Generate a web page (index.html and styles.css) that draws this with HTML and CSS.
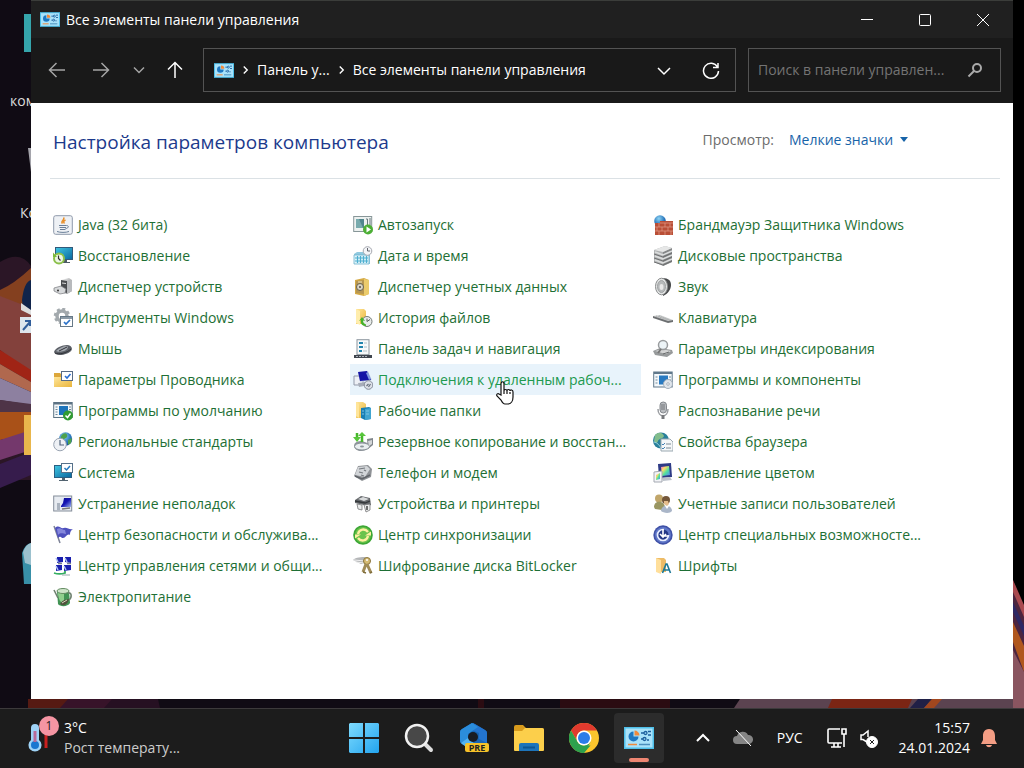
FILE: index.html
```html
<!DOCTYPE html>
<html lang="ru">
<head>
  <meta charset="UTF-8" />
  <title>Все элементы панели управления</title>
  <link rel="stylesheet" href="styles.css">
</head>
<body>
  <svg class="sprite" aria-hidden="true">
    <defs>
      <linearGradient id="g-screen" x1="0" y1="0" x2="1" y2="1"><stop offset="0" stop-color="#3fc4e0"/><stop offset="1" stop-color="#0b6aa2"/></linearGradient>
      <linearGradient id="g-folder" x1="0" y1="0" x2="1" y2="1"><stop offset="0" stop-color="#ffe69a"/><stop offset="1" stop-color="#eab53c"/></linearGradient>
      <linearGradient id="g-metal" x1="0" y1="0" x2="1" y2="1"><stop offset="0" stop-color="#f2f2f2"/><stop offset="1" stop-color="#7d7f82"/></linearGradient>
      <radialGradient id="g-globe" cx=".4" cy=".3" r=".8"><stop offset="0" stop-color="#8fd4f4"/><stop offset=".6" stop-color="#2a78bd"/><stop offset="1" stop-color="#123e80"/></radialGradient>
      <linearGradient id="g-navy" x1="0" y1="0" x2="1" y2="1"><stop offset="0" stop-color="#0a0a8c"/><stop offset=".5" stop-color="#1515b4"/><stop offset="1" stop-color="#9db6ee"/></linearGradient>
      <linearGradient id="g-win" x1="0" y1="0" x2="1" y2="1"><stop offset="0" stop-color="#7fdcff"/><stop offset="1" stop-color="#22a3ee"/></linearGradient>
      <linearGradient id="g-rainbow" x1="0" y1="0" x2="1" y2="1"><stop offset="0" stop-color="#f06ad8"/><stop offset=".3" stop-color="#fd6"/><stop offset=".6" stop-color="#4de0a0"/><stop offset="1" stop-color="#5a7bff"/></linearGradient>
    </defs>

    <symbol id="i-panel" viewBox="0 0 30 22">
      <rect width="30" height="22" fill="#4fc0ea"/><rect x="1.500" y="1.500" width="27" height="19" fill="#a9e2fa"/>
      <path d="M9.500 4.500a5 5 0 1 0 5 5h-5z" fill="#1e78c2"/><path d="M10.500 3.500v5h5a5 5 0 0 0-5-5z" fill="#f08a3c"/>
      <g fill="none" stroke="#1d5f9e" stroke-width="1.300"><path d="M17 6h3M17 12h2"/><circle cx="21.500" cy="6" r="1.500"/><circle cx="20.500" cy="12" r="1.500"/><path d="M24 4.500h3M24 8h3M23 13h2"/></g>
      <path d="M4 17.500h9" stroke="#f08a3c" stroke-width="1.500"/><path d="M15 17.500h11" stroke="#4a8fbd" stroke-width="1.500"/>
    </symbol>

    <symbol id="i-java" viewBox="0 0 20 20">
      <rect x=".7" y=".7" width="18.600" height="18.600" rx="2" fill="#eef1f5" stroke="#8e99aa"/>
      <path d="M10.500 2.500c2 2-3.500 3.500-1 6M12.500 5c-2 1-2.500 2-1 3.500" fill="none" stroke="#e8902c" stroke-width="1.500"/>
      <path d="M6 10.500h7.500M6.500 12.500h6.500M7 14.500h5.500" stroke="#6a7f98" stroke-width="1.200"/><path d="M13.500 10.500c3 0 2 3-1 3M4 16.500c3 1.200 9 1.200 12 0" fill="none" stroke="#6a7f98"/>
    </symbol>
    <symbol id="i-recovery" viewBox="0 0 20 20">
      <path d="M2 1h18v13H2z" fill="#31597a"/><path d="M3 2h16v11H3z" fill="url(#g-screen)"/><path d="M11 14h3v2h3v1h-8z" fill="#4e5c66"/>
      <circle cx="6" cy="12.500" r="5" fill="#eef7e6" stroke="#8cc04c" stroke-width="2"/><path d="M5.500 9.500v3l2 2" fill="none" stroke="#333" stroke-width="1.200"/><path d="M0 6.500v4.500h4z" fill="#7eb93c"/>
    </symbol>
    <symbol id="i-device" viewBox="0 0 20 20">
      <path d="M8 3l8-2 3 2v11l-5 3-6-2z" fill="url(#g-metal)"/><path d="M8 3l6 1v12l-6-2z" fill="#4b4d50"/><path d="M14 4l5-1v11l-5 3z" fill="#b8babd"/><path d="M1 11l7-2 5 3-1 4-5 1-6-3z" fill="#d7d9db" stroke="#77797c" stroke-width=".7"/><circle cx="5" cy="13.500" r="1" fill="#333"/><path d="M9 6l4 .5" stroke="#ddd"/>
    </symbol>
    <symbol id="i-tools" viewBox="0 0 20 20">
      <circle cx="9" cy="8" r="5" fill="none" stroke="#a3a9ad" stroke-width="3.500"/><circle cx="9" cy="8" r="7" fill="none" stroke="#a3a9ad" stroke-width="2.500" stroke-dasharray="3 2.500"/>
      <rect x="7.500" y="8.500" width="12" height="10" fill="#fff" stroke="#667988"/><path d="M7.500 10h12" stroke="#667988" stroke-width="1.500"/><path d="M11 14l2 2 4-4" fill="none" stroke="#2a71c8" stroke-width="1.700"/>
    </symbol>
    <symbol id="i-mouse" viewBox="0 0 20 20">
      <path d="M1 13c1-4 8-7 13-7 5 .5 6 4 4 6-3 4-16 6-17 1z" fill="#5b5f66"/><path d="M3 12c3-3 7-5 11-5 2 1 0 4-3 5-3 1-7 1-8 0z" fill="#a2a7ae"/><path d="M6 12l8-4M2 14c4 2 12 0 16-4" fill="none" stroke="#303238" stroke-width="1"/>
    </symbol>
    <symbol id="i-explorer" viewBox="0 0 20 20">
      <path d="M1 3h6l2 2h10v12H1z" fill="#dda73a"/><path d="M1 7h18v10H1z" fill="url(#g-folder)"/><rect x="8.500" y="1.500" width="11" height="9" fill="#fff" stroke="#586b85"/><path d="M12 6l2 2 3.500-4" fill="none" stroke="#2b6ed2" stroke-width="1.600"/>
    </symbol>
    <symbol id="i-defaults" viewBox="0 0 20 20">
      <rect x=".7" y="1.500" width="18.500" height="15" fill="#f5f8fa" stroke="#5c7384"/><path d="M1 2.500h18" stroke="#5c7384" stroke-width="2"/><rect x="6" y="5" width="9" height="9" fill="#1d74bb"/><path d="M2.500 6h2M2.500 8.500h2M2.500 11h2M2.500 13.500h2M16 6h2M16 8.500h2" stroke="#6c8699"/>
      <circle cx="15" cy="14.500" r="5" fill="#309b32"/><path d="M12.500 14.500l2 2 3-4" fill="none" stroke="#fff" stroke-width="1.500"/>
    </symbol>
    <symbol id="i-region" viewBox="0 0 20 20">
      <circle cx="12.500" cy="7" r="6.700" fill="url(#g-globe)"/><path d="M10 2c3-2 5 1 4 3s-4 1-4 4c-3-1-3-5 0-7zM15 8l4-2-1 5-3 2z" fill="#4da24d"/><circle cx="7" cy="12.500" r="6.300" fill="#eef1f5" stroke="#9aa4b2"/><path d="M7 8v5h4" fill="none" stroke="#53657d" stroke-width="1.200"/>
    </symbol>
    <symbol id="i-system" viewBox="0 0 20 20">
      <path d="M1 2h18v13H1z" fill="#2a5f82"/><path d="M2 3h16v11H2z" fill="url(#g-screen)"/><path d="M9 15h3v2h3v1H6v-1h3z" fill="#526370"/><rect x="8.500" y=".5" width="11" height="9" fill="#fff" stroke="#56718a"/><path d="M11.500 5l2 2 3.500-4" fill="none" stroke="#2679bf" stroke-width="1.500"/>
    </symbol>
    <symbol id="i-trouble" viewBox="0 0 20 20">
      <rect x=".7" y="2" width="18" height="15" fill="#e7ebf1" stroke="#848d99"/><path d="M8 4h10v9H8z" fill="url(#g-navy)"/><path d="M8 4h3l-1 5-2 3z" fill="#dfe7f7"/><path d="M4 9h3v7H4z" fill="#aab3bf"/><path d="M9 15l8-1" stroke="#777" stroke-width="1.500"/>
    </symbol>
    <symbol id="i-flag" viewBox="0 0 20 20">
      <path d="M1 1l6 17" stroke="#7d8296" stroke-width="1.500"/><path d="M2 3c4-4 5 1 9 0 3-1 5 2 9 1-3 2-3 4-3 6-3-2-4 3-7 3-2 0-2-3-5 0z" fill="#4e50bd"/><path d="M4 4c4-2 4 1 8 1l1 4c-3 0-5-2-8 1z" fill="#8587dc"/>
    </symbol>
    <symbol id="i-network" viewBox="0 0 20 20">
      <g fill="#1a1fae"><path d="M4 1h6v5l-6 1zM12 1h6v6l-6-1zM3 9h6v5l-6 1zM11 9h7v5l-7 1z"/></g><path d="M3 2l2 4M12 2l2 4M3 10l2 4M11 10l2 4" stroke="#afc0f1" stroke-width="1.500"/><path d="M5 7.500h4M14 7.500h4" stroke="#77818e" stroke-width="1.500"/><path d="M1 17c3 1 8 1 11 0v-2" stroke="#35ae62" stroke-width="1.800" fill="none"/><path d="M9 19h8" stroke="#9aa" stroke-width="1"/>
    </symbol>
    <symbol id="i-power" viewBox="0 0 20 20">
      <path d="M4 4h12l1 12c-2 4-10 4-12 1z" fill="#419354"/><path d="M5 5h6v12c-3-1-6-4-6-12z" fill="#8fcf8d"/><ellipse cx="10" cy="4" rx="6" ry="2.500" fill="#cde4c9" stroke="#648c62"/><path d="M1 3l4 8M15 6c4-1 4 5 1 7" fill="none" stroke="#708271" stroke-width="1.600"/><path d="M7 17c3-5 6-4 9-5-1 5-5 8-9 5z" fill="#51523d"/><path d="M9 16l5-3" stroke="#d9d6bd"/>
    </symbol>

    <symbol id="i-autoplay" viewBox="0 0 20 20">
      <rect x=".7" y="1.500" width="18" height="15" fill="#edf1f0" stroke="#879698"/><rect x="3" y="4" width="8" height="9" fill="#4f868d"/><path d="M3 4h3l4 9H3z" fill="#78aaad"/><path d="M13 4h1.500v6M17 3v7" fill="none" stroke="#67797c"/><circle cx="15" cy="14.500" r="5" fill="#4caf35"/><path d="M13.500 11.500v6l4.500-3z" fill="#fff"/>
    </symbol>
    <symbol id="i-date" viewBox="0 0 20 20">
      <path d="M1 8l3-2h13v12H1z" fill="#91c9df"/><path d="M1 9h15v9H1z" fill="#dff4fb" stroke="#6cb2cd" stroke-width=".8"/><path d="M2 12h13M2 15h13M4.500 10v7M7.500 10v7M10.500 10v7M13.500 10v7" stroke="#4eafd0" stroke-width="1.200"/><circle cx="14.500" cy="5" r="4.300" fill="#f4f5f8" stroke="#a6a9b0"/><path d="M14.500 2v3h2.500" fill="none" stroke="#63666e"/>
    </symbol>
    <symbol id="i-safe" viewBox="0 0 20 20">
      <path d="M2 3l9-2 5 2v14l-5 2-9-2z" fill="#d5aa45"/><path d="M11 2l5 1v14l-5 2z" fill="#ebcb6c"/><path d="M3 4l8-1v14l-8-1z" fill="#b69651"/><circle cx="7" cy="10" r="3.500" fill="#d9d4c5" stroke="#68614c"/><circle cx="7" cy="10" r="1" fill="#544d3d"/><path d="M5 5h4" stroke="#f2e6bb"/>
    </symbol>
    <symbol id="i-history" viewBox="0 0 20 20">
      <path d="M3 1h8l2 2v13H3z" fill="url(#g-folder)"/><path d="M3 1l4 2v14l-4-2z" fill="#ffedac"/><circle cx="14" cy="13.500" r="5" fill="#e9eceb" stroke="#737b77"/><path d="M14 10.500v3l3-2" fill="none" stroke="#59615d"/><path d="M13 18c-4 0-6-3-5-6l-2 1 3-4 3 4-2-.5c0 2 1 3 3 4z" fill="#45b12a"/>
    </symbol>
    <symbol id="i-taskbar" viewBox="0 0 20 20">
      <rect x="4" y=".7" width="12" height="15" fill="#f7f9fa" stroke="#8c969e"/><path d="M6 4h4M6 8h4M6 12h3" stroke="#2184ad" stroke-width="1.800"/><path d="M11 4h3M11 8h3M10 12h4" stroke="#b4c1c9"/><path d="M1 16h18v3H1z" fill="#3f454e"/><path d="M3 17.500h12" stroke="#aab1ba" stroke-dasharray="2 1"/>
    </symbol>
    <symbol id="i-remote" viewBox="0 0 20 20">
      <path d="M1 6h9v9H1z" fill="#edf0f6" stroke="#9299a9"/><path d="M5 2l10-1 4 9-12 2z" fill="#d0d8e8"/><path d="M5 2l9-1 4 9-11 1z" fill="#1515a5"/><path d="M13 3l2-1 3 7-2 1z" fill="#829dde"/><path d="M5 13l9-1 2 3-10 2z" fill="#a7adb9"/><circle cx="15.500" cy="15" r="4.300" fill="#dce0e7" stroke="#858c9a"/><path d="M13.500 16l2-2M15.500 17l2-3" stroke="#68717e" stroke-width="1.200"/>
    </symbol>
    <symbol id="i-work" viewBox="0 0 20 20">
      <path d="M3 1h7l3 2v14H3z" fill="url(#g-folder)"/><path d="M3 1l3 2v14l-3-2z" fill="#ffe59a"/><path d="M8 7l8-1 2 1v11l-6 1-4-2z" fill="#187fb4"/><path d="M12 8l6-1v11l-6 1z" fill="#40a5d0"/><path d="M9 10h2M9 13h2M13 10h3M13 13h3" stroke="#7fc4e2"/>
    </symbol>
    <symbol id="i-backup" viewBox="0 0 20 20">
      <path d="M14 7l6-1v7l-5 4z" fill="#80868b"/><path d="M1 14c0-4 4-5 8-5l8 3v3c-4 5-15 6-16-1z" fill="#8f969c"/><ellipse cx="9" cy="14.500" rx="7.500" ry="3.500" fill="#e9eef0" stroke="#8a9298"/><ellipse cx="9" cy="14.500" rx="2" ry="1" fill="#8b949b"/><path d="M15 9l4-1v4l-3 2z" fill="#d3d6d8"/><path d="M4 1v6M9 10V3" stroke="#47b72c" stroke-width="2.500"/><path d="M0 5h8l-4 5zM5 4h8L9 0z" fill="#58c63b"/>
    </symbol>
    <symbol id="i-phone" viewBox="0 0 20 20">
      <path d="M5 3l10-1 4 4-1 8-9 4-8-5z" fill="#8f9296"/><path d="M5 4l9-1 3 3-5 8-10-2z" fill="#d2d5d8"/><path d="M6 6l6-1M6 9l4 1M11 7l2 1M8 12l3 1" stroke="#75797e" stroke-width="1.200"/><path d="M2 13l7 3 8-4" fill="none" stroke="#606469" stroke-width="1.500"/>
    </symbol>
    <symbol id="i-printer" viewBox="0 0 20 20">
      <path d="M2 6l6-4 9 2 1 7-3 1-13-3z" fill="#66696c"/><path d="M5 5l5-2 6 2-5 2z" fill="#d8dadb"/><path d="M2 7l10 2 5-2" fill="none" stroke="#34373a" stroke-width="1.300"/><path d="M4 10l5 1v5l-4-1zM11 11l6-1v6l-4 2z" fill="#eceded" stroke="#77797a" stroke-width=".8"/><path d="M14 12v4" stroke="#444" stroke-width="1.500"/>
    </symbol>
    <symbol id="i-sync" viewBox="0 0 20 20">
      <circle cx="10" cy="10" r="9.800" fill="#3da735"/><circle cx="10" cy="10" r="8" fill="#6ac34c"/><path d="M5 9c1-5 7-6 10-2M15 11c-1 5-7 6-10 2" fill="none" stroke="#fff0a0" stroke-width="2.300"/><path d="M18 6.500v4h-6zM2 13.500v-4h6z" fill="#fff0a0"/>
    </symbol>
    <symbol id="i-keys" viewBox="0 0 20 20">
      <path d="M0 4c3-3 8-3 13-3l-1 6-4 1z" fill="#b4b6b8"/><path d="M1 4l11 1M3 6l8 1" stroke="#eee"/><circle cx="14" cy="5" r="3.500" fill="#d5bb74" stroke="#89743d"/><path d="M13 8l-3 8M14 8l4 9" stroke="#a08c58" stroke-width="3"/><path d="M10 16l3 1M17 17l2-1" stroke="#7f6c3b" stroke-width="1.500"/><circle cx="14" cy="4" r="1" fill="#fff"/>
    </symbol>

    <symbol id="i-firewall" viewBox="0 0 20 20">
      <circle cx="7" cy="6" r="5.800" fill="url(#g-globe)"/><path d="M2 8h5V6h6v0h7v14H2z" fill="#b94e36"/><path d="M2 12h18M2 16h18M7 8h13M6 8v4M12 8v4M17 8v4M9 12v4M15 12v4M4 12v4M6 16v4M12 16v4M18 16v4" stroke="#dd9682" stroke-width=".8"/>
    </symbol>
    <symbol id="i-storage" viewBox="0 0 20 20">
      <path d="M1 4l11-4 7 2v14l-9 4-9-4z" fill="#b0b2b3"/><path d="M10 6l9-4v14l-9 4z" fill="#858788"/><path d="M1 4l9 2 9-4-7-2z" fill="#e6e7e7"/><path d="M2 6l8 3 9-4M2 10l8 3 9-4M2 14l8 3 9-4" fill="none" stroke="#dcdede" stroke-width="1.500"/><path d="M1 8l9 3 9-4M1 12l9 3 9-4M1 16l9 3 9-4" fill="none" stroke="#6f7172"/>
    </symbol>
    <symbol id="i-sound" viewBox="0 0 20 20">
      <path d="M9 1c7 0 9 3 9 7s-3 9-8 11z" fill="#47494b"/><ellipse cx="8.500" cy="9.500" rx="6" ry="8.300" fill="#e1e3e3" stroke="#8b8d8e"/><ellipse cx="8.500" cy="9.500" rx="4" ry="6" fill="#b7babb" stroke="#a0a3a4"/><ellipse cx="8.500" cy="10" rx="2" ry="3" fill="#e9e9e9"/>
    </symbol>
    <symbol id="i-keyboard" viewBox="0 0 20 20">
      <path d="M0 8l7-1 13 5-5 2z" fill="#c8caca"/><path d="M0 8l15 5 5-1v2l-5 1L0 10z" fill="#6c6f71"/><path d="M3 8l12 4M6 8l11 4" stroke="#a5a8a9" stroke-dasharray="1 1"/>
    </symbol>
    <symbol id="i-index" viewBox="0 0 20 20">
      <path d="M0 12l7-3 12 2 1 3-6 4-12-2z" fill="#979a9b"/><path d="M2 12l7-2 9 2-5 3z" fill="#d3d4d4"/><circle cx="10" cy="6" r="4.500" fill="#edf4f7" stroke="#999c9e" stroke-width="1.500"/><path d="M8 10l-3 4" stroke="#777" stroke-width="2"/><path d="M10 15l6-2" stroke="#696c6d"/>
    </symbol>
    <symbol id="i-programs" viewBox="0 0 20 20">
      <rect x=".7" y="2" width="18.500" height="15" fill="#f4f8fb" stroke="#60788b"/><path d="M1 3h18" stroke="#60788b" stroke-width="2"/><rect x="6" y="5.500" width="9" height="9" fill="#297ac1"/><path d="M2.500 7h2M2.500 10h2M2.500 13h2M16 7h2M16 10h2" stroke="#718b9d"/><circle cx="15" cy="14" r="4.500" fill="#dfe5eb" stroke="#a5b0bc"/><circle cx="15" cy="14" r="1.300" fill="#fff" stroke="#a5b0bc"/>
    </symbol>
    <symbol id="i-mic" viewBox="0 0 20 20">
      <rect x="7" y="1" width="6.500" height="11" rx="3.200" fill="#b9bcc0" stroke="#84888d"/><path d="M8 4h4M8 6h4M8 8h4" stroke="#73777b"/><path d="M5 8c0 9 10 9 10 0" fill="none" stroke="#9b9ea2" stroke-width="1.500"/><path d="M10 14v4" stroke="#77797c" stroke-width="3"/>
    </symbol>
    <symbol id="i-browser" viewBox="0 0 20 20">
      <circle cx="8" cy="8.500" r="8" fill="#297f9b"/><path d="M2 3c4-4 8-2 9 1-1 3-5 2-6 5s-3 2-4 0z" fill="#82bd8c"/><path d="M1 10c4 1 5 3 7 6" stroke="#93d0df" fill="none"/><path d="M8 7h9l3 3v9H8z" fill="#f5f7f8" stroke="#9aa8b1"/><path d="M9 12l1 1 2-2M9 16l1 1 2-2" fill="none" stroke="#4682b3"/><path d="M13 12h5M13 16h5" stroke="#7c8a94"/>
    </symbol>
    <symbol id="i-color" viewBox="0 0 20 20">
      <path d="M5 1l13-1 1 14-13 1z" fill="#2e3b86"/><path d="M8 4l8-1 1 9-8 1z" fill="url(#g-rainbow)"/><path d="M9 15l8-1 2 3-9 1z" fill="#bcc2cb"/><path d="M1 9l8-1v11H1z" fill="#f3f4f7" stroke="#a4a9b2"/><path d="M3 12l4-2v6l-4 1z" fill="url(#g-rainbow)"/>
    </symbol>
    <symbol id="i-users" viewBox="0 0 20 20">
      <circle cx="6" cy="4.500" r="4" fill="#c1a66a"/><path d="M1 13c0-7 10-7 11 0l-3 3-7-1z" fill="#9a9662"/><circle cx="13" cy="6" r="4" fill="#74573a"/><path d="M11 7h4l1 3-2 2-3-2z" fill="#e5bc8b"/><path d="M8 17c0-7 11-7 11 0-2 3-9 2-11 0z" fill="#aab6c8"/><path d="M12 12l2 3 2-3" fill="#fff"/>
    </symbol>
    <symbol id="i-access" viewBox="0 0 20 20">
      <circle cx="10" cy="10" r="9.700" fill="#3f51a7"/><circle cx="10" cy="10" r="8" fill="#6077c8"/><circle cx="10" cy="10" r="5.500" fill="#243786" stroke="#e7edff" stroke-width="1.700" stroke-dasharray="26 8"/><path d="M10 4v7h5M7 9l3 3 3-3" fill="none" stroke="#fff" stroke-width="1.600"/>
    </symbol>
    <symbol id="i-fonts" viewBox="0 0 20 20">
      <path d="M3 2h8l2 2v12H3z" fill="#edbb66"/><path d="M3 2l5 2v14l-5-2z" fill="#ffdf9b"/><path d="M9.500 17l3.500-9h1l3.500 9M11 14h5" fill="none" stroke="#1c7998" stroke-width="1.600"/>
    </symbol>
  </svg>

  <main class="desktop">
    <svg class="wallpaper" viewBox="0 0 1024 708" preserveAspectRatio="none" aria-hidden="true">
      <rect width="1024" height="708" fill="#100b14"/>
      <path d="M0 262Q20 250 31 266V480H0z" fill="#2b1626"/>
      <path d="M0 290Q14 284 31 268V306L0 304z" fill="#84401f"/>
      <path d="M0 296L31 308V375L0 350z" fill="#83413c"/>
      <path d="M0 350L31 370V382L0 364z" fill="#a02415"/>
      <path d="M0 364L31 382V392L0 378z" fill="#b0684e"/>
      <path d="M0 378L31 392V405L0 400z" fill="#8d80a0"/>
      <path d="M0 400L31 404V414L0 416z" fill="#4e3447"/>
      <path d="M0 412H31V434L0 440z" fill="#a95118"/>
      <path d="M0 440L31 430V450L0 460z" fill="#74386c"/>
      <path d="M0 464L31 452V475L0 488z" fill="#361c4c"/>
      <path d="M28 699h84v9H28z" fill="#371329"/><path d="M28 699h40l-8 9H28z" fill="#561a13"/><path d="M112 699h46l2 9h-56z" fill="#261022"/>
      <path d="M478 699h6v9h-6zM560 699h110v9H560z" fill="#2b0c12"/>
      <path d="M740 699h284v9H734z" fill="#5b4350"/><path d="M832 699h80l-4 9h-80z" fill="#7b2514"/><path d="M918 699h14l-8 9h-14z" fill="#202046"/><path d="M932 699h10l-8 9h-10z" fill="#a1471e"/>
      <path d="M1013 0h11v610l-11-28z" fill="#000"/>
      <path d="M1013 580l11 28v100h-11z" fill="#4c253f"/><path d="M1013 580l11 25v12l-11-25z" fill="#a94a50"/><path d="M1013 602l11 24v10l-11-24z" fill="#2d2764"/><path d="M1013 622l11 24v26l-11-30z" fill="#b0571e"/><path d="M1013 650l11 22v36h-11z" fill="#8a5560"/>
      <path d="M24 14h7v38h-7z" fill="#35a5ac"/>
      <path d="M28 148h3v24z" fill="#a5a5ac"/>
      <path d="M22 300q2-18 9-20v34q-9-2-9-14z" fill="#10244b"/><path d="M21 303l10 7v5l-10-5z" fill="#ddd"/>
      <path d="M20 317h11v16H20z" fill="#dde5ec"/><path d="M23 330l7-8M25 321h5v5" fill="none" stroke="#315d9a" stroke-width="2"/>
      <path d="M24 415h7v40h-7z" fill="#e9b64c"/>
      <path d="M22 553q3-9 9-10v41h-7z" fill="#388fa7"/><path d="M23 552q3-8 8-9v22l-6-2z" fill="#9cc1ce"/>
    </svg>
    <div class="shortcut-labels">
      <span class="label-computer">компь</span>
      <span class="label-trash">Корз</span>
    </div>

    <section class="window">
      <header class="titlebar">
        <svg class="panel-icon"><use href="#i-panel"/></svg>
        <span class="title">Все элементы панели управления</span>
        <div class="window-buttons">
          <button type="button" aria-label="Свернуть"><svg viewBox="0 0 14 14"><path d="M1 6.500h12"/></svg></button>
          <button type="button" aria-label="Развернуть"><svg viewBox="0 0 14 14"><rect x="1.500" y="1.500" width="11" height="11" rx="1"/></svg></button>
          <button type="button" aria-label="Закрыть"><svg viewBox="0 0 14 14"><path d="M1 1l12 12M13 1L1 13"/></svg></button>
        </div>
      </header>

      <nav class="navbar">
        <div class="history">
          <button type="button" class="dim" aria-label="Назад"><svg viewBox="0 0 18 18"><path d="M17 9H2M8.500 2L1.500 9l7 7"/></svg></button>
          <button type="button" class="dim" aria-label="Вперед"><svg viewBox="0 0 18 18"><path d="M1 9h15M9.500 2l7 7-7 7"/></svg></button>
          <button type="button" class="dim small" aria-label="Последние расположения"><svg viewBox="0 0 18 18"><path d="M4 6.500l5 5 5-5"/></svg></button>
          <button type="button" class="up" aria-label="Вверх"><svg viewBox="0 0 18 18"><path d="M9 17V2M2 8.500l7-7 7 7"/></svg></button>
        </div>
        <div class="address">
          <svg class="panel-icon"><use href="#i-panel"/></svg>
          <svg class="sep" viewBox="0 0 8 10"><path d="M2 1l4 4-4 4"/></svg>
          <a href="#" class="crumb">Панель у...</a>
          <svg class="sep" viewBox="0 0 8 10"><path d="M2 1l4 4-4 4"/></svg>
          <a href="#" class="crumb">Все элементы панели управления</a>
          <button type="button" class="address-open" aria-label="Предыдущие расположения"><svg viewBox="0 0 18 18"><path d="M3 7l6 6 6-6"/></svg></button>
          <button type="button" aria-label="Обновить"><svg viewBox="0 0 18 18"><path d="M15.500 6A7.500 7.500 0 1 0 16.500 10M16 2v4.500h-5"/></svg></button>
        </div>
        <form class="search">
          <input type="text" aria-label="Поиск" placeholder="Поиск в панели управлен..." />
          <button type="button" aria-label="Найти"><svg viewBox="0 0 16 16"><circle cx="10" cy="6" r="4"/><path d="M7 9l-5.500 5.500"/></svg></button>
        </form>
      </nav>

      <div class="content">
        <div class="heading">
          <h1>Настройка параметров компьютера</h1>
          <label for="view">Просмотр:</label>
          <div class="view-select">
            <select id="view">
              <option>Мелкие значки</option>
            </select>
            <svg viewBox="0 0 8 5" aria-hidden="true"><path d="M0 0h8L4 5z"/></svg>
          </div>
        </div>

        <ul class="items">
          <li><a href="#"><svg><use href="#i-java"/></svg>Java (32 бита)</a></li>
          <li><a href="#"><svg><use href="#i-autoplay"/></svg>Автозапуск</a></li>
          <li><a href="#"><svg><use href="#i-firewall"/></svg>Брандмауэр Защитника Windows</a></li>
          <li><a href="#"><svg><use href="#i-recovery"/></svg>Восстановление</a></li>
          <li><a href="#"><svg><use href="#i-date"/></svg>Дата и время</a></li>
          <li><a href="#"><svg><use href="#i-storage"/></svg>Дисковые пространства</a></li>
          <li><a href="#"><svg><use href="#i-device"/></svg>Диспетчер устройств</a></li>
          <li><a href="#"><svg><use href="#i-safe"/></svg>Диспетчер учетных данных</a></li>
          <li><a href="#"><svg><use href="#i-sound"/></svg>Звук</a></li>
          <li><a href="#"><svg><use href="#i-tools"/></svg>Инструменты Windows</a></li>
          <li><a href="#"><svg><use href="#i-history"/></svg>История файлов</a></li>
          <li><a href="#"><svg><use href="#i-keyboard"/></svg>Клавиатура</a></li>
          <li><a href="#"><svg><use href="#i-mouse"/></svg>Мышь</a></li>
          <li><a href="#"><svg><use href="#i-taskbar"/></svg>Панель задач и навигация</a></li>
          <li><a href="#"><svg><use href="#i-index"/></svg>Параметры индексирования</a></li>
          <li><a href="#"><svg><use href="#i-explorer"/></svg>Параметры Проводника</a></li>
          <li class="active">
            <a href="#"><svg><use href="#i-remote"/></svg>Подключения к удаленным рабоч...</a>
            <svg class="cursor" viewBox="0 0 18 24" aria-hidden="true"><path d="M5 14V3c0-3 3-3 3 0v7c0-2 3-2 3 0 0-2 3-2 3 0 0-1.500 3-1.500 3 1v5c0 4-2 7-5 7H9c-2 0-3-2-4-4l-4-4c-1-2 1-3 2-2z"/><path d="M8 10v3M11 10v3M14 11v2"/></svg>
          </li>
          <li><a href="#"><svg><use href="#i-programs"/></svg>Программы и компоненты</a></li>
          <li><a href="#"><svg><use href="#i-defaults"/></svg>Программы по умолчанию</a></li>
          <li><a href="#"><svg><use href="#i-work"/></svg>Рабочие папки</a></li>
          <li><a href="#"><svg><use href="#i-mic"/></svg>Распознавание речи</a></li>
          <li><a href="#"><svg><use href="#i-region"/></svg>Региональные стандарты</a></li>
          <li><a href="#"><svg><use href="#i-backup"/></svg>Резервное копирование и восстан...</a></li>
          <li><a href="#"><svg><use href="#i-browser"/></svg>Свойства браузера</a></li>
          <li><a href="#"><svg><use href="#i-system"/></svg>Система</a></li>
          <li><a href="#"><svg><use href="#i-phone"/></svg>Телефон и модем</a></li>
          <li><a href="#"><svg><use href="#i-color"/></svg>Управление цветом</a></li>
          <li><a href="#"><svg><use href="#i-trouble"/></svg>Устранение неполадок</a></li>
          <li><a href="#"><svg><use href="#i-printer"/></svg>Устройства и принтеры</a></li>
          <li><a href="#"><svg><use href="#i-users"/></svg>Учетные записи пользователей</a></li>
          <li><a href="#"><svg><use href="#i-flag"/></svg>Центр безопасности и обслужива...</a></li>
          <li><a href="#"><svg><use href="#i-sync"/></svg>Центр синхронизации</a></li>
          <li><a href="#"><svg><use href="#i-access"/></svg>Центр специальных возможносте...</a></li>
          <li><a href="#"><svg><use href="#i-network"/></svg>Центр управления сетями и общи...</a></li>
          <li><a href="#"><svg><use href="#i-keys"/></svg>Шифрование диска BitLocker</a></li>
          <li><a href="#"><svg><use href="#i-fonts"/></svg>Шрифты</a></li>
          <li><a href="#"><svg><use href="#i-power"/></svg>Электропитание</a></li>
        </ul>
      </div>
    </section>
  </main>

  <footer class="taskbar">
    <button type="button" class="weather">
      <span class="weather-icon">
        <svg viewBox="0 0 22 30" aria-hidden="true"><path d="M18 12v13" stroke="#c8201f" stroke-width="3"/><path d="M3 5a4 4 0 0 1 8 0v12a6.500 6.500 0 1 1-8 0z" fill="#9fd3f7"/><circle cx="7" cy="22" r="4" fill="#1b77d0"/><path d="M7 8v11" stroke="#b86a9a" stroke-width="3"/></svg>
        <span class="badge">1</span>
      </span>
      <span class="weather-text"><span>3°C</span><span class="forecast">Рост температу...</span></span>
    </button>

    <div class="apps">
      <button type="button" aria-label="Пуск"><svg viewBox="0 0 30 30"><path d="M1 0h13v14H0V1zM16 0h13l1 1v13H16zM0 16h14v14H1l-1-1zM16 16h14v13l-1 1H16z" fill="url(#g-win)"/></svg></button>
      <button type="button" aria-label="Поиск"><svg viewBox="0 0 30 30"><path d="M20 20l7 7" stroke="#dedede" stroke-width="4" stroke-linecap="round"/><circle cx="13" cy="13" r="11" fill="#484848" stroke="#f1f1f1" stroke-width="2.500"/></svg></button>
      <button type="button" aria-label="Dev Home"><svg viewBox="0 0 30 30"><path d="M1 9q0-2 2-3L13 0q1 0 3 1l10 6q2 1 2 3v11l-12 8L3 21q-2-1-2-3z" fill="#1765b5"/><path d="M14 0l12 7q2 1 2 3v10l-8-4v-6l-7-3z" fill="#2374cf"/><path d="M1 9q0-2 2-3L13 0l6 4-10 7v6l-7 3q-1-1-1-3z" fill="#2b8ddc"/><path d="M2 20l7-5 9 8-3 6-12-8z" fill="#52b4f4"/><circle cx="14" cy="14" r="5" fill="#191d24"/><rect x="6" y="20" width="24" height="9" rx="2" fill="#f6c229"/><text x="18" y="28" class="pre">PRE</text></svg></button>
      <button type="button" aria-label="Проводник"><svg viewBox="0 0 30 30"><path d="M0 4q0-2 2-2h7l3 3h16q2 0 2 2v8H0z" fill="#d89b1c"/><path d="M0 8h8l3-3h17q2 0 2 2v20q0 1-1 1H1q-1 0-1-1z" fill="#fccf4b"/><path d="M5 28v-6q0-2 2-2h16q2 0 2 2v6z" fill="#1d74ba"/><path d="M9 24.500h12" stroke="#0c5693" stroke-width="2"/></svg></button>
      <button type="button" aria-label="Chrome"><svg viewBox="0 0 30 30"><circle cx="15" cy="15" r="15" fill="#fbc52d"/><path d="M2 7.500a15 15 0 0 1 26 0H15a7.500 7.500 0 0 0-6.500 11.200z" fill="#e03a2e"/><path d="M2 7.500l6.500 11.200A7.500 7.500 0 0 0 15 22.500h6.500L15 30A15 15 0 0 1 2 7.500z" fill="#2da14d"/><path d="M21.500 18.700L15 30a10 10 0 0 1-3-.5l3.500-7z" fill="#2da14d"/><circle cx="15" cy="15" r="7.500" fill="#fff"/><circle cx="15" cy="15" r="6" fill="#2b7de9"/></svg></button>
      <button type="button" class="running" aria-label="Панель управления"><svg class="wide" viewBox="0 0 30 22"><use href="#i-panel"/></svg></button>
    </div>

    <div class="tray">
      <button type="button" aria-label="Скрытые значки"><svg viewBox="0 0 20 20"><path d="M4 13l6-6 6 6" stroke-width="2"/></svg></button>
      <button type="button" aria-label="OneDrive"><svg viewBox="0 0 20 20"><path d="M4 16a4 4 0 0 1 0-8 6 6 0 0 1 11-1 4.500 4.500 0 0 1 1 9z" class="cloud"/><path d="M3 2l15 16"/></svg></button>
      <button type="button" class="lang">РУС</button>
      <button type="button" class="network" aria-label="Сеть"><svg viewBox="0 0 20 20"><path d="M13 1H2q-1 0-1 1v12q0 1 1 1h13M7 15v4M11 15v4M4 19h10M15 1h4v5h-4zM17 6v13" stroke-width="1.600"/></svg></button>
      <button type="button" class="volume" aria-label="Звук"><svg viewBox="0 0 20 20"><path d="M8 14l-4-2.500H2V7h2l5-4v6" stroke-width="1.500"/><circle cx="13" cy="14" r="5.500" class="mute"/><path d="M11 12l4 4M15 12l-4 4" class="cross"/></svg></button>
      <button type="button" class="clock"><span>15:57</span><span>24.01.2024</span></button>
      <button type="button" aria-label="Уведомления"><svg viewBox="0 0 20 20"><path d="M10 1c-5 0-6 4-6 7v4l-2 4h16l-2-4V8c0-3-1-7-6-7zM7 17c1 3 5 3 6 0z" class="bell"/></svg></button>
    </div>
  </footer>
</body>
</html>
```

FILE: styles.css
```css
* {
  box-sizing: border-box;
}

body {
  margin: 0;
  min-height: 100vh;
  display: flex;
  flex-direction: column;
  overflow: hidden;
  font-family: "Open Sans", "Noto Sans", sans-serif;
  font-size: 14px;
  line-height: 20px;
  background-color: #100b14;
}

button,
input,
select {
  font: inherit;
  color: inherit;
  background: none;
  border: none;
  padding: 0;
}

button {
  display: flex;
  align-items: center;
  justify-content: center;
}

a {
  text-decoration: none;
}

.sprite {
  position: absolute;
  width: 0;
  height: 0;
}

/* Desktop */
.desktop {
  position: relative;
  flex: 1;
  display: flex;
  padding: 0 11px 9px 31px;
}

.wallpaper {
  position: absolute;
  inset: 0;
  width: 100%;
  height: 100%;
}

.shortcut-labels span {
  position: absolute;
  color: #ddd;
}

.label-computer {
  top: 91px;
  left: 10px;
}

.label-trash {
  top: 203px;
  left: 20px;
}

/* Window */
.window {
  position: relative;
  flex: 1;
  display: flex;
  flex-direction: column;
  background-color: #fff;
}

.titlebar {
  display: flex;
  align-items: center;
  height: 38px;
  padding: 0 1px 0 9px;
  border-top: 1px solid #3b3d3a;
  background-color: #202020;
  color: #fff;
}

.panel-icon {
  width: 20px;
  height: 15px;
  flex: none;
}

.title {
  margin-left: 6px;
}

.window-buttons {
  display: flex;
  margin-left: auto;
}

.window-buttons button {
  width: 58px;
  height: 37px;
}

.window-buttons svg {
  width: 14px;
  height: 14px;
}

.window-buttons svg,
.navbar button svg,
.sep {
  fill: none;
  stroke: #fff;
}

.navbar {
  display: flex;
  gap: 12px;
  height: 65px;
  padding: 10px 12px 11px 8px;
  background-color: #191919;
  color: #fff;
}

.history {
  display: flex;
  align-items: center;
  gap: 8px;
  width: 152px;
}

.history button {
  width: 36px;
  height: 40px;
}

.history button svg {
  width: 18px;
  height: 18px;
  stroke-width: 1.5;
}

.history .small {
  width: 24px;
}

.history .up {
  width: 32px;
}

.history .dim svg {
  stroke: #a5a5a5;
}

.address {
  display: flex;
  flex: 1;
  align-items: center;
  gap: 8px;
  padding: 0 15px 0 10px;
  border: 1px solid #535353;
}

.crumb {
  color: #fff;
}

.sep {
  width: 7px;
  height: 10px;
  stroke-width: 1.6;
}

.address button svg {
  width: 18px;
  height: 18px;
  stroke-width: 1.5;
}

.address .address-open {
  margin-left: auto;
  margin-right: 21px;
}

.search {
  display: flex;
  align-items: center;
  width: 253px;
  padding: 0 17px 0 9px;
  border: 1px solid #535353;
}

.search input {
  flex: 1;
  min-width: 0;
  outline: none;
}

.search input::placeholder {
  color: #747474;
  opacity: 1;
}

.search button svg {
  width: 16px;
  height: 16px;
  stroke: #aaa;
  stroke-width: 2;
}

/* Content */
.content {
  flex: 1;
  padding: 0 13px 0 19px;
}

.heading {
  display: flex;
  align-items: center;
  height: 76px;
  padding: 0 92px 2px 3px;
  border-bottom: 1px solid #dbe1e5;
}

h1 {
  margin: 4px auto 0 0;
  font-size: 19px;
  line-height: 26px;
  font-weight: normal;
  color: #1c3a8c;
}

.heading label {
  color: #6c6c6c;
}

.view-select {
  display: flex;
  align-items: center;
  gap: 6px;
  margin-left: 15px;
  color: #1763a8;
}

.view-select select {
  appearance: none;
}

.view-select svg {
  width: 8px;
  height: 5px;
  fill: #1763a8;
}

.items {
  display: grid;
  grid-template-columns: repeat(auto-fill, 291px);
  column-gap: 9px;
  margin: 0;
  padding: 30px 0 0;
  list-style: none;
}

.items li {
  position: relative;
}

.items a {
  display: flex;
  align-items: center;
  gap: 5px;
  height: 31px;
  padding-left: 3px;
  white-space: nowrap;
  color: #1e6f35;
}

.items a svg {
  width: 20px;
  height: 20px;
  flex: none;
}

.items .active a {
  background-color: #e8f3fb;
  color: #20994f;
}

.cursor {
  position: absolute;
  top: 17px;
  left: 146px;
  width: 18px;
  height: 24px;
  z-index: 1;
  fill: #fff;
  stroke: #111;
  stroke-width: 1.2;
}

/* Taskbar */
.taskbar {
  display: grid;
  grid-template-columns: 1fr auto 1fr;
  align-items: center;
  height: 60px;
  padding: 0 25px 2px 28px;
  border-top: 1px solid #3c3a3b;
  background-color: #1c1c1c;
  color: #fff;
}

.weather {
  justify-self: start;
  gap: 14px;
  text-align: left;
}

.weather-icon {
  position: relative;
  display: flex;
}

.weather-icon svg {
  width: 22px;
  height: 30px;
}

.badge {
  position: absolute;
  top: -7px;
  left: 11px;
  width: 20px;
  height: 20px;
  border-radius: 50%;
  background-color: #f595a3;
  color: #222;
  font-size: 12px;
  text-align: center;
}

.weather-text,
.clock {
  display: flex;
  flex-direction: column;
}

.forecast {
  color: #ccc;
}

.apps {
  display: flex;
  gap: 5px;
  margin-right: 24px;
}

.apps button {
  position: relative;
  width: 50px;
  height: 50px;
  border-radius: 4px;
}

.apps svg {
  width: 30px;
  height: 30px;
}

.apps .wide {
  height: 22px;
}

.pre {
  font-size: 9px;
  font-weight: bold;
  text-anchor: middle;
  fill: #222;
}

.apps .running {
  background-color: #2c2c2c;
}

.running::after {
  content: "";
  position: absolute;
  bottom: 1px;
  left: 15px;
  width: 20px;
  height: 4px;
  border-radius: 2px;
  background-color: #ee8672;
}

.tray {
  display: flex;
  align-items: center;
  justify-self: end;
}

.tray svg {
  width: 20px;
  height: 20px;
  fill: none;
  stroke: #fff;
}

.tray .cloud {
  fill: #858585;
  stroke: none;
}

.lang {
  margin: 0 24px;
}

.tray button:first-child {
  margin-right: 20px;
}

.volume {
  margin: 0 20px 0 12px;
}

.tray .mute {
  fill: #fff;
}

.tray .cross {
  stroke: #222;
}

.tray .clock {
  align-items: flex-end;
  margin-right: 9px;
}

.tray .bell {
  fill: #f39d84;
  stroke: none;
}
```
